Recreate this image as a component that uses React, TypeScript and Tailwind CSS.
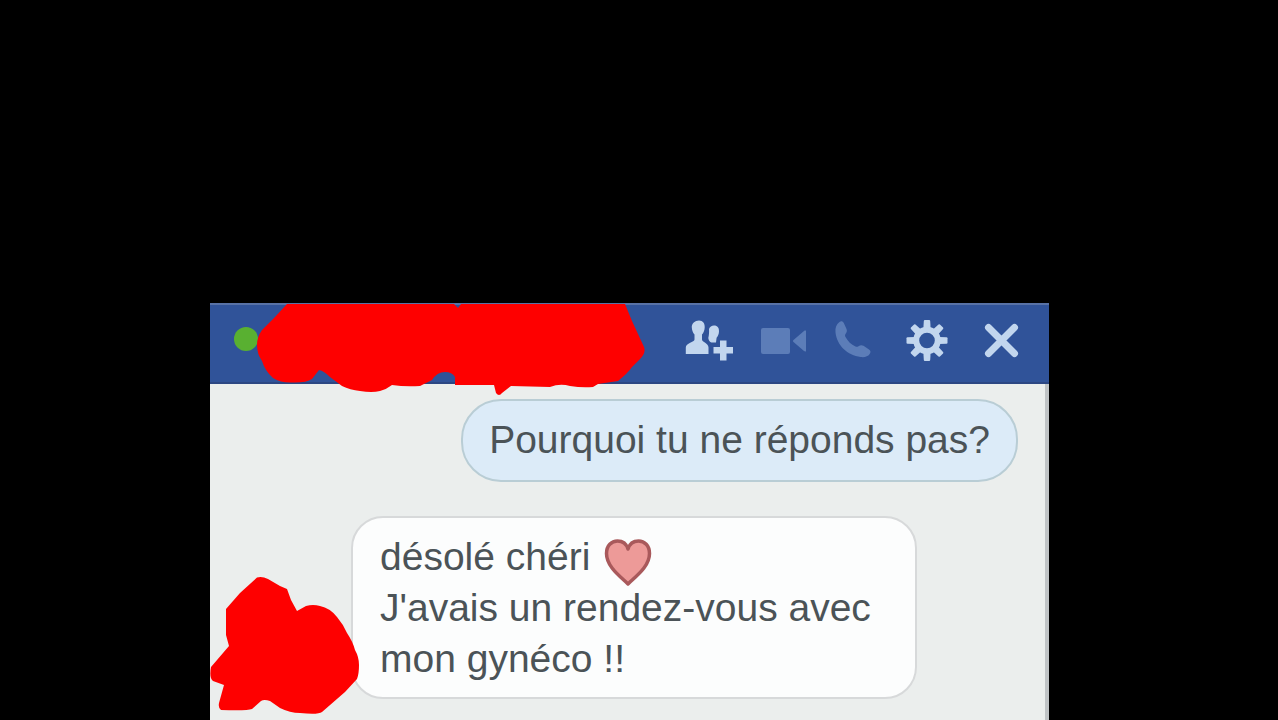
import type { ReactNode } from "react";

function HeaderButton({ label, dim, children }: { label: string; dim?: boolean; children: ReactNode }) {
  return (
    <button
      type="button"
      aria-label={label}
      className={dim ? "size-12 shrink-0 text-[#5c7db8]" : "size-12 shrink-0 text-[#c2d6ee]"}
    >
      <svg viewBox="0 0 48 48" className="size-12" fill="currentColor" aria-hidden="true">
        {children}
      </svg>
    </button>
  );
}

function AddPeopleIcon() {
  return (
    <>
      <path d="M14 3.500c4 0 6 3 5.700 7-.2 3-1.200 5.500-2.700 7v5c0 2.500 6.500 3.500 6.500 8v6.500H.8v-6.500c0-4.500 8.700-5.500 8.700-8v-5c-1.500-1.500-2.500-4-2.700-7-.3-4 3.200-7 7.200-7z" />
      <path d="M29 8.500c3.600 0 5.200 2.500 5 6-.2 2.800-1 4.800-2.400 6.200L31 25.500h-4.500c-1.800-.6-2.800-2-3.200-4.500.8-3 .9-6 .7-9 .8-2.300 2.600-3.500 5-3.500z" />
      <path d="M35 23.500h6.500V30H48v6.500h-6.500v7H35v-7h-6.500V30H35z" />
    </>
  );
}

function VideoIcon() {
  return (
    <>
      <rect x="3" y="11" width="29" height="26" rx="2" />
      <path d="M35.500 23l10.500-9c1.200-.9 2.500-.4 2.500 1v18c0 1.400-1.300 1.900-2.500 1l-10.500-9q-1-1 0-2z" />
    </>
  );
}

function PhoneIcon() {
  return (
    <path d="M8.500 5C10 3.800 11.800 4.200 12.800 6l2.700 6c.8 1.800.3 3.500-1 5-.6 1-.6 2 0 3 2.500 4.500 5.500 7.500 10 9.500 1 .5 2 .4 3-.3 1.800-1.200 3.200-1.400 5-.4l5.500 3.700c1.800 1.200 1.900 2.800.7 4.500-1.900 2.600-5 3.500-9 3C16.500 38.500 6 28.500 4.500 15.500 4 11 5.200 7.500 8.500 5z" />
  );
}

const teeth = [0, 45, 90, 135, 180, 225, 270, 315];

function GearIcon() {
  return (
    <>
      <circle cx="23" cy="23.500" r="10.800" fill="none" stroke="currentColor" strokeWidth="6" />
      {teeth.map((angle) => (
        <path key={angle} d="M19.400 11.500l.4-7.500q.1-1 1-1h4.400q.9 0 1 1l.4 7.500z" transform={`rotate(${angle} 23 23.500)`} />
      ))}
    </>
  );
}

function CloseIcon() {
  return (
    <path
      d="M11.500 10.500l26 26M37.500 10.500l-26 26"
      fill="none"
      stroke="currentColor"
      strokeWidth="7"
      strokeLinecap="round"
    />
  );
}

function Heart() {
  return (
    <svg viewBox="0 0 48 48" role="img" aria-label="cœur" className="-my-2 ml-[14px] inline-block size-12 align-[-8px]">
      <path
        d="M24 46C17 39 2.500 29 2.500 15.500 2.500 7.500 7.500 3 13.500 3 18.500 3 22.500 6 24 11 25.500 6 29.500 3 34.500 3c6 0 11 4.500 11 12.500C45.500 29 31 39 24 46z"
        fill="#ed9a98"
        stroke="#a9595b"
        strokeWidth="3.500"
        strokeLinejoin="round"
      />
    </svg>
  );
}

export default function App() {
  return (
    <main className="flex min-h-screen flex-col bg-black pt-[303px] pr-[229px] pl-[210px] font-['Liberation_Sans',Arial,sans-serif] text-[39px] leading-[51px] text-[#4b5357]">
      <section className="flex grow flex-col bg-[#ebeeed]">
        <header className="relative flex h-[81px] items-center justify-between border-t-2 border-b-2 border-t-[#5872a6] border-b-[#2c4783] bg-[#305399] pr-6 pb-[5px] pl-6">
          <span className="mb-1 size-6 rounded-full bg-[#59b031]" />
          <svg
            viewBox="255 303 392 94"
            className="absolute -top-0.5 left-[45px] h-[94px] w-[392px]"
            fill="#fe0000"
            aria-hidden="true"
          >
            <path d="M287 304L275 317 262 330Q257 337 257 345 257 354 262 361 265 371 273 378 281 383 292 382.500 306 383 312 379L319 370Q324 371 330 377L342 386Q350 390 360 391 372 393 380 391 387 389 392 385 405 387 420 386L432 380Q437 372 445 372 452 372 455 377L455 385 494 385 496 393Q499 397 502 393L511 386 550 387Q560 383 570 386 582 388 593 387L598 384 618 381Q628 373 632 367L641 358Q646 352 644 347L638 334 632 321 625 304H461L458 308 454 304z" />
          </svg>
          <nav className="flex gap-[25px]">
            <HeaderButton label="Ajouter des amis">
              <AddPeopleIcon />
            </HeaderButton>
            <HeaderButton label="Appel vidéo" dim>
              <VideoIcon />
            </HeaderButton>
            <HeaderButton label="Appel" dim>
              <PhoneIcon />
            </HeaderButton>
            <HeaderButton label="Options">
              <GearIcon />
            </HeaderButton>
            <HeaderButton label="Fermer">
              <CloseIcon />
            </HeaderButton>
          </nav>
        </header>

        <div className="flex grow flex-col gap-[34px] border-r-4 border-[#bfc3c5] pt-[15px] pb-[21px]">
          <p className="mr-[27px] self-end rounded-[40px] border-2 border-[#b9cdd5] bg-[#dcebf8] px-[26px] pt-[13px] pb-[15px]">
            Pourquoi tu ne réponds pas?
          </p>
          <div className="flex items-end">
            <svg
              viewBox="210 576 150 139"
              className="relative -mr-[9px] -mb-4 h-[139px] w-[150px] shrink-0"
              fill="#fe0000"
              aria-hidden="true"
            >
              <path d="M257 577.500Q262 576 268 579L280 586 287 589 291 600 297 611 306 606Q313 604 320 606 330 608 337 617 343 624 347 633 353 642 355 650 359 657 359 665 359 674 357 679L345 692 322 712Q318 715 300 713 290 713 280 708L270 701Q264 699 261 701L252 709Q247 711 221 710 218 708 219 703L224 685 213 681Q209 678 211 667L229 646 226 635 226 609 240 593z" />
            </svg>
            <p className="rounded-[32px] border-2 border-[#d7d9da] bg-[#fcfdfd] py-[13px] pr-[44px] pl-[27px]">
              désolé chéri
              <Heart />
              <br />
              J'avais un rendez-vous avec
              <br />
              mon gynéco !!
            </p>
          </div>
        </div>
      </section>
    </main>
  );
}
